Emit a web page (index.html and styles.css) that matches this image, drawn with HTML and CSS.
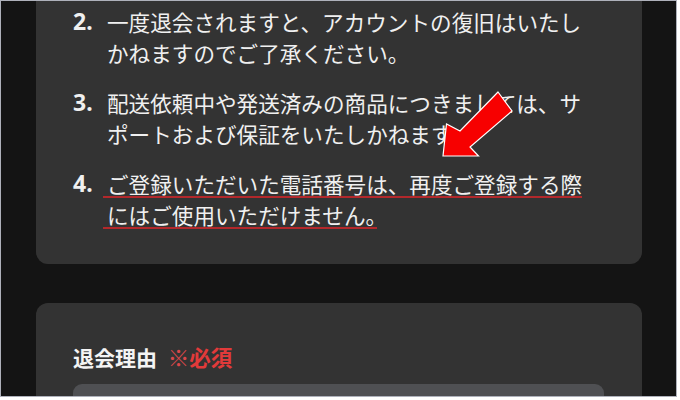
FILE: index.html
```html
<!DOCTYPE html>
<html lang="ja">
<head>
<meta charset="utf-8">
<title>退会</title>
<link rel="stylesheet" href="styles.css">
</head>
<body>
<div class="frame">
  <div class="page">
    <section class="card notes">
      <ol class="list" start="2">
        <li class="item"><span class="num">2.</span><p class="txt">一度退会されますと、アカウントの復旧はいたしかねますのでご了承ください。</p></li>
        <li class="item"><span class="num">3.</span><p class="txt">配送依頼中や発送済みの商品につきましては、サポートおよび保証をいたしかねます。</p></li>
        <li class="item"><span class="num">4.</span><p class="txt"><span class="mark">ご登録いただいた電話番号は、再度ご登録する際にはご使用いただけません。</span></p></li>
      </ol>
    </section>
    <section class="card reason">
      <h2 class="label">退会理由 <span class="req"><span class="kome">※</span>必須</span></h2>
      <div class="field"></div>
    </section>
  </div>
  <svg class="arrow" width="677" height="397" viewBox="0 0 677 397" aria-hidden="true">
    <polygon points="498,92 512,111 470,147 478.5,156 443,156 446.5,124 460,131" fill="#f70000" stroke="#ffffff" stroke-width="1.2" stroke-linejoin="miter"/>
  </svg>
</div>
</body>
</html>
```

FILE: styles.css
```css
html, body {
  margin: 0;
  padding: 0;
  background: #ffffff;
}

.frame {
  position: relative;
  width: 677px;
  height: 397px;
  box-sizing: border-box;
  border: 1px solid #aeb1bb;
  background: #141414;
  overflow: hidden;
  font-family: "Noto Sans CJK JP", "Noto Sans", sans-serif;
  color: #f0f0f0;
}

.page {
  display: flex;
  flex-direction: column;
  gap: 39px;
  padding: 0 34px 0 35px;
}

.card {
  background: #333333;
  border-radius: 12px;
}

.notes {
  margin-top: -30px;
  padding: 34.5px 48px 34px 37px;
}

.list {
  list-style: none;
  margin: 0;
  padding: 0;
  display: flex;
  flex-direction: column;
  gap: 19px;
}

.item {
  display: grid;
  grid-template-columns: 34px 1fr;
  font-size: 21.6px;
  line-height: 31px;
}

.num {
  font-weight: 700;
  font-size: 23px;
  font-family: "Noto Sans", "Noto Sans CJK JP", sans-serif;
}

.txt {
  margin: 0;
}

.mark {
  margin-left: -4px;
  padding-left: 4px;
  background-image: linear-gradient(#b3282b, #b3282b);
  background-repeat: no-repeat;
  background-size: 100% 2px;
  background-position: left 0 bottom 1px;
  -webkit-box-decoration-break: clone;
  box-decoration-break: clone;
}

/* trims the underline so it stops at the full stop's ink */
.mark::after {
  content: "";
  display: inline-block;
  width: 10px;
  height: 4px;
  margin-left: -10px;
  vertical-align: -5.5px;
  background: #333333;
}

.reason {
  padding: 39px 38px 40px 37px;
}

.label {
  margin: 0 0 12px;
  font-size: 21px;
  line-height: 30px;
  font-weight: 700;
  color: #f4f4f4;
}

.req {
  margin-left: 6px;
  font-size: 21.5px;
  color: #e23a3a;
}

.kome {
  font-weight: 400;
  color: #d9474a;
}

.field {
  height: 56px;
  background: #4f5053;
  border-radius: 9px;
}

.arrow {
  position: absolute;
  left: -1px;
  top: -1px;
  pointer-events: none;
}
```
